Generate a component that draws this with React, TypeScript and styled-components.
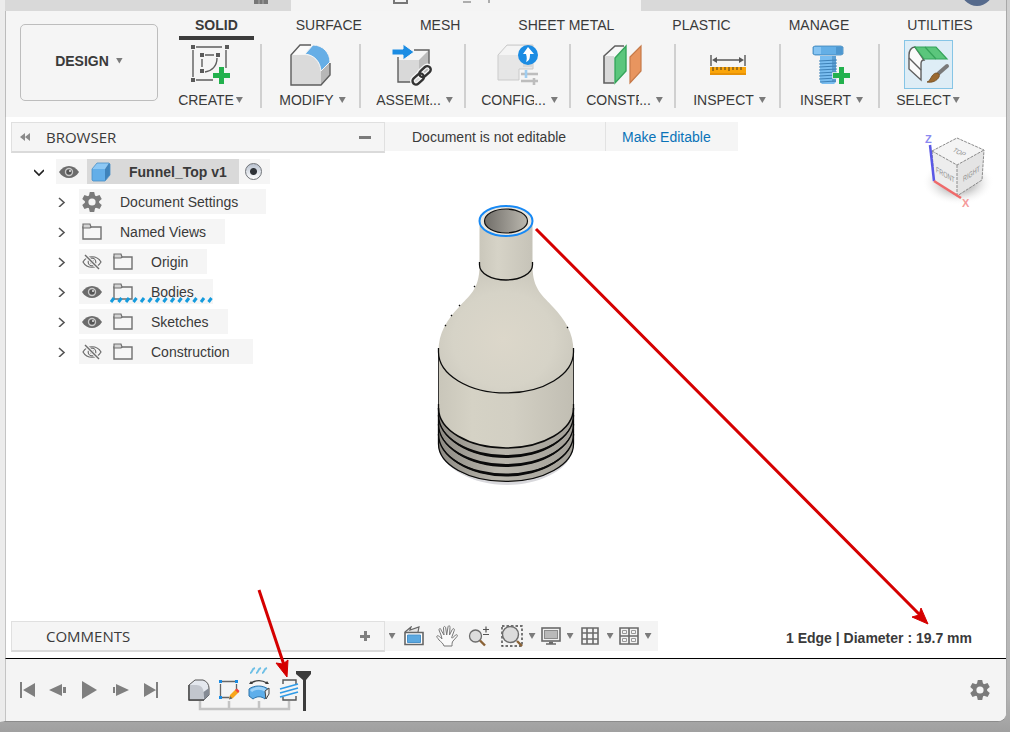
import React from "react";
import styled, { createGlobalStyle, css } from "styled-components";

const Global = createGlobalStyle`
  * { box-sizing: border-box; }
  html, body { margin: 0; padding: 0; }
  body { background: #a6a6a6; font-family: "Liberation Sans", Arial, sans-serif; font-size: 14px; line-height: 16px; color: #3a3a3a; }
  button { font: inherit; color: inherit; background: none; border: 0; padding: 0; margin: 0; }
  svg { display: block; flex: none; }
`;

const Desktop = styled.div`
  min-height: 100vh;
  display: flex;
  padding: 0 3px 10px 0;
  background: linear-gradient(#d0d0d0, #c6c6c6 60%, #b4b4b4 95%, #a0a0a0);
`;

const Window = styled.div`
  position: relative;
  flex: 1;
  min-width: 0;
  display: flex;
  flex-direction: column;
  background: #fff;
  border-left: 5px solid #ececec;
  border-right: 1px solid #a8a8a8;
  border-bottom: 1px solid #8c8c8c;
  border-bottom-right-radius: 9px;
  overflow: hidden;
`;

const TitleBar = styled.header`
  display: flex;
  height: 11px;
  background: #d9d9d9;
  overflow: hidden;
`;

const TitleSide = styled.div<{ $grow?: boolean }>`
  flex: ${(p) => (p.$grow ? "1" : "0 0 286px")};
  display: flex;
  justify-content: flex-end;
  padding-right: ${(p) => (p.$grow ? "16px" : "22px")};
`;

const DocumentTab = styled.div`
  flex: 0 0 350px;
  display: flex;
  padding-left: 102px;
  background: #f4f4f4;
`;

const Ribbon = styled.div`
  display: flex;
  height: 106px;
  padding-left: 14px;
  background: #f5f5f5;
  border-left: 1px solid #bcbcbc;
  flex: none;
`;

const WorkspaceButton = styled.button`
  display: flex;
  align-items: center;
  justify-content: center;
  gap: 7px;
  width: 138px;
  height: 77px;
  margin-top: 13px;
  flex: none;
  border: 1px solid #bdbdbd;
  border-radius: 5px;
  background: #f5f5f5;
  font-weight: bold;
  padding-bottom: 4px;
`;

const RibbonBody = styled.div`
  flex: 1;
  min-width: 0;
  padding-left: 21px;
`;

const Tabs = styled.nav`
  display: flex;
  gap: 26px;
  height: 29px;
`;

const Tab = styled.button<{ $active?: boolean }>`
  height: 29px;
  padding: 2px 16px 0;
  white-space: nowrap;
  border-bottom: 4px solid transparent;
  ${(p) => p.$active && css`border-color: #3c3c3c; font-weight: bold;`}
`;

const Tools = styled.div`
  display: flex;
  padding-top: 4px;
`;

const Tool = styled.button<{ $width: number; $first?: boolean; $last?: boolean }>`
  width: ${(p) => p.$width}px;
  height: 64px;
  flex: none;
  display: flex;
  flex-direction: column;
  align-items: center;
  justify-content: space-between;
  padding-right: ${(p) => (p.$first ? "18px" : "0")};
  border-right: ${(p) => (p.$last ? "0" : "2px solid #d0d0d0")};
`;

const ToolIcon = styled.span<{ $selected?: boolean }>`
  display: flex;
  align-items: center;
  justify-content: center;
  width: 49px;
  height: 49px;
  margin-top: -4px;
  border: 1px solid ${(p) => (p.$selected ? "#86c5e6" : "transparent")};
  background: ${(p) => (p.$selected ? "#deedf6" : "none")};
`;

const ToolLabel = styled.span<{ $tight?: boolean }>`
  display: flex;
  align-items: center;
  gap: ${(p) => (p.$tight ? "2px" : "5px")};
  padding-left: ${(p) => (p.$tight ? "0" : "4px")};
`;

const Clipped = styled.span`
  display: flex;
  & > span { width: 53px; overflow: hidden; text-align: left; }
`;

const CaretShape = styled.span`
  width: 7px;
  height: 6px;
  flex: none;
  background: #7b7b7b;
  clip-path: polygon(0 0, 100% 0, 50% 100%);
`;
const Caret = () => <CaretShape aria-hidden />;

const Viewport = styled.main`
  position: relative;
  flex: 1;
  display: flex;
  flex-direction: column;
  padding: 5px 0 6px 5px;
  border-left: 1px solid #c4c4c4;
  background: #fff;
`;

const TopRow = styled.div`
  display: flex;
  align-items: flex-start;
`;

const PanelHeader = styled.div`
  width: 374px;
  height: 31px;
  flex: none;
  display: flex;
  align-items: center;
  padding: 0 13px 0 7px;
  background: #f5f5f5;
  border: 1px solid #e0e0e0;
  border-bottom: 2px solid #dadada;
`;

const PanelTitle = styled.h2`
  flex: 1;
  margin: 0 0 0 15px;
  font: 400 15px/20px "Open Sans", "Noto Sans", sans-serif;
`;

const PanelButton = styled.button`
  display: flex;
  align-items: center;
  justify-content: center;
  width: 12px;
  height: 20px;
`;

const Notice = styled.div`
  display: flex;
  height: 29px;
  background: #f5f5f5;
`;

const NoticeText = styled.span`
  width: 221px;
  padding: 7px 0 0 27px;
  border-right: 1px solid #e2e2e2;
`;

const NoticeLink = styled.a`
  padding: 7px 27px 0 16px;
  color: #0a73b8;
  text-decoration: none;
`;

const Tree = styled.ul`
  list-style: none;
  margin: 0;
  padding: 6px 0 0 15px;
  width: max-content;
`;

const TreeRow = styled.li<{ $root?: boolean }>`
  display: flex;
  height: 25px;
  margin-bottom: 5px;
  padding-left: ${(p) => (p.$root ? "0" : "22px")};
`;

const Toggle = styled.button<{ $root?: boolean }>`
  width: ${(p) => (p.$root ? "30px" : "31px")};
  display: flex;
  align-items: center;
  padding-left: ${(p) => (p.$root ? "8px" : "10px")};
`;

const RowBody = styled.div<{ $pad?: number }>`
  position: relative;
  display: flex;
  align-items: center;
  padding-right: ${(p) => p.$pad ?? 19}px;
  background: #f5f5f5;
`;

const Slot = styled.button<{ $wide?: boolean }>`
  width: ${(p) => (p.$wide ? "41px" : "31px")};
  height: 25px;
  display: flex;
  align-items: center;
  padding-left: 3px;
`;

const RootName = styled.div`
  display: flex;
  align-items: center;
  height: 25px;
  width: 152px;
  margin-right: 6px;
  padding-left: 4px;
  gap: 18px;
  background: #d9d9d9;
  font-weight: bold;
`;

const Radio = styled.input`
  appearance: none;
  width: 17px;
  height: 17px;
  margin: 0;
  border: 1px solid #6f7378;
  border-radius: 50%;
  background: radial-gradient(circle, #2f3338 0 3px, transparent 4px), linear-gradient(#b9c2d0, #fff);
`;

const Squiggle = styled.svg`
  position: absolute;
  left: 31px;
  bottom: 1px;
`;

const Spacer = styled.div`
  flex: 1;
`;

const BottomRow = styled.div`
  display: flex;
  align-items: flex-start;
  padding-right: 34px;
`;

const NavBar = styled.div`
  display: flex;
  align-items: center;
  height: 30px;
  padding: 0 6px 0 3px;
  background: #f4f4f4;
`;

const NavButton = styled.button<{ $width: number }>`
  width: ${(p) => p.$width}px;
  height: 30px;
  display: flex;
  align-items: center;
  justify-content: center;
`;

const Status = styled.strong`
  margin-left: auto;
  padding-top: 9px;
  white-space: nowrap;
`;

const Model = styled.svg`
  position: absolute;
  left: 50%;
  top: 83px;
  margin-left: -76px;
`;

const ViewCube = styled.svg`
  position: absolute;
  right: 10px;
  top: 13px;
`;

const Timeline = styled.footer`
  display: flex;
  align-items: center;
  height: 63px;
  flex: none;
  padding: 0 16px 0 5px;
  border-top: 1px solid #000;
  border-left: 1px solid #c4c4c4;
  background: #f4f4f4;
`;

const PlayButton = styled.button`
  width: 31px;
  height: 30px;
  display: flex;
  align-items: center;
  justify-content: center;
`;

const FeatureStrip = styled.div`
  position: relative;
  display: flex;
  margin-left: 18px;
`;

const Feature = styled.button`
  position: relative;
  width: 30px;
  height: 62px;
  display: flex;
  align-items: center;
  justify-content: center;
`;

const TimelineTrack = styled.svg`
  position: absolute;
  left: 0;
  top: 0;
`;

const SettingsButton = styled.button`
  margin-left: auto;
`;

const Annotations = styled.svg`
  position: absolute;
  inset: 0;
  width: 100%;
  height: 100%;
  pointer-events: none;
`;

/* ---------- ribbon icons ---------- */

const Plus = ({ x, y }: { x: number; y: number }) => (
  <path
    transform={`translate(${x} ${y})`}
    d="M6 0h5v6h6v5h-6v6H6v-6H0V6h6z"
    fill="#23b14d"
    stroke="#f5f5f5"
    strokeWidth="1.5"
    paintOrder="stroke"
  />
);

const CreateIcon = () => (
  <svg width="44" height="42" viewBox="0 0 44 42">
    <g stroke="#5e5e5e" strokeWidth="1.4" fill="none">
      <path d="M7 3h26M4 6v27M37 6v18M7 36h17M16 11h9M13 15v8M28 14c0 8-5 13-12 14" />
    </g>
    <path d="M2 1h4v4H2zM36 1h4v4h-4zM2 34h4v4H2zM11 9h4v4h-4zM27 9h4v4h-4zM11 25h4v4h-4z" fill="#5a5a5a" />
    <Plus x={24} y={23} />
  </svg>
);

const ModifyIcon = () => (
  <svg width="42" height="42" viewBox="0 0 42 42">
    <path d="M1 11 10 1h11l-6 9z" fill="#fafafa" />
    <path d="M1 11h14c9 0 15 7 16 18v12H1z" fill="#dadada" />
    <path d="M31 27 40 18v13l-9 10z" fill="#b7b7b7" />
    <path d="M21 1H10L1 11v30h30l9-10V19" fill="none" stroke="#5d5d5d" strokeWidth="1.4" />
    <path d="M23 1c10 0 17 8 17 17l-9 9c-1-10-7-16-16-17z" fill="#66aee6" stroke="#f5f5f5" strokeWidth="1" />
  </svg>
);

const AssembleIcon = () => (
  <svg width="44" height="42" viewBox="0 0 44 42">
    <path d="M7 16 17 6h21L28 16z" fill="#f5f5f5" />
    <path d="M7 16h21v22H7z" fill="#d9d9d9" />
    <path d="M28 16 38 6v22L28 38z" fill="#bcbcbc" />
    <path d="M23 6h15v20M7 13v25h14" fill="none" stroke="#5f5f5f" strokeWidth="1.4" />
    <path d="M1 5h11V0l11 8-11 8v-5H1z" fill="#1b8ce3" stroke="#f5f5f5" strokeWidth="1" />
    <g transform="rotate(-42 31 31)" fill="none">
      <g stroke="#f5f5f5" strokeWidth="5">
        <rect x="19" y="28" width="13" height="7" rx="3.5" />
        <rect x="29" y="27" width="13" height="7" rx="3.5" />
      </g>
      <g stroke="#333" strokeWidth="2.4">
        <rect x="19" y="28" width="13" height="7" rx="3.5" />
        <rect x="29" y="27" width="13" height="7" rx="3.5" />
      </g>
    </g>
  </svg>
);

const ConfigureIcon = () => (
  <svg width="42" height="42" viewBox="0 0 42 42">
    <path d="M1 11 10 1h26v24H22v11H1z" fill="#e6e6e6" stroke="#cbcbcb" />
    <path d="M2 11 10 2h20l-9 9z" fill="#f4f4f4" />
    <path d="M26 12 36 3v20H26z" fill="#d7d7d7" />
    <path d="M24 30h17M24 37h17M37 34v7" stroke="#bdbdbd" strokeWidth="2.6" />
    <path d="M29 26v8" stroke="#9fcdf0" strokeWidth="2.6" />
    <circle cx="31" cy="11" r="10" fill="#1b8ce3" />
    <path d="M31 3l6 7h-4c0 5-1 7-4 8 1-2 1-5 0-8h-3z" fill="#fff" />
  </svg>
);

const ConstructIcon = () => (
  <svg width="42" height="42" viewBox="0 0 42 42">
    <path d="M2 12 13 2h10L13 12z" fill="#f8f8f8" />
    <path d="M2 12h10v27H2z" fill="#d9d9d9" />
    <path d="M22 2h-9L2 12v27h10" fill="none" stroke="#5f5f5f" strokeWidth="1.6" />
    <path d="M13 14 24 2v25L13 39z" fill="#5bc67c" stroke="#35a45a" strokeWidth="1.4" />
    <path d="M28 13 39 2v25L28 39z" fill="#e8955f" stroke="#c67a49" strokeWidth="1.2" />
  </svg>
);

const InspectIcon = () => (
  <svg width="36" height="42" viewBox="0 0 36 42">
    <path d="M1 11v11M35 11v11M4 16h28" stroke="#585858" strokeWidth="1.4" />
    <path d="M2 16l5-3v6zM34 16l-5-3v6z" fill="#585858" />
    <path d="M0 23h36v8H0z" fill="#faa50a" />
    <path d="M0 30h36" stroke="#e08c08" strokeWidth="1.5" />
    <path d="M3 23v4M7 23v3M11 23v3M15 23v3M19 23v4M23 23v3M27 23v3M31 23v3" stroke="#7a5a1c" strokeWidth="1.4" />
  </svg>
);

const InsertIcon = () => (
  <svg width="42" height="42" viewBox="0 0 42 42">
    <path d="M11 12h16v26l-2 2H13l-2-2z" fill="#79bdf0" />
    <path d="M23 12h4v26h-4z" fill="#5c9fd2" />
    <path d="M10 17l18-1M10 20l18-1M10 23l18-1M10 26l18-1M10 29l18-1M10 32l18-1M10 35l18-1M11 38l16-1" stroke="#3e82b8" strokeWidth="1" />
    <path d="M4 3l2-1h26l2 1v7l-2 1H6l-2-1z" fill="#64afe6" stroke="#3e84b8" strokeWidth=".8" />
    <path d="M5 3h7v7H5z" fill="#86c4f2" />
    <path d="M27 3h6v7h-6z" fill="#4e97cf" />
    <Plus x={24} y={23} />
  </svg>
);

const SelectIcon = () => (
  <svg width="47" height="47" viewBox="1 1 47 47">
    <path d="M11 7l9 13c-2 0-3 2-3 4v16L5 29V15c0-4 2-8 6-8z" fill="#fafafa" stroke="#5f5f5f" strokeWidth="1.4" />
    <path d="M5 18l12 12" stroke="#5f5f5f" strokeWidth="1.4" />
    <path d="M11 7h21l11 12H20z" fill="#5bc67c" stroke="#35a45a" strokeWidth="1.2" />
    <path d="M21 7l11 12" stroke="#35a45a" strokeWidth="1.2" />
    <path d="M43 26l-8 7" stroke="#7a7a7a" strokeWidth="4" strokeLinecap="round" />
    <path d="M23 42c4-1 4-8 9-9 3 0 4 2 3 4-2 4-7 6-12 5z" fill="#9a6930" stroke="#6f4a1f" strokeWidth=".8" />
  </svg>
);

/* ---------- browser icons ---------- */

const Eye = () => (
  <svg width="20" height="14" viewBox="0 0 20 14">
    <path d="M0 7C5-1 15-1 20 7 15 15 5 15 0 7z" fill="#6c6c6c" />
    <circle cx="10" cy="7" r="4.2" fill="#c9c9c9" />
    <circle cx="10" cy="7" r="2.8" fill="#555" />
    <circle cx="11" cy="6" r="1" fill="#e8e8e8" />
  </svg>
);

const EyeOff = () => (
  <svg width="20" height="16" viewBox="0 0 20 16" fill="none" stroke="#6c6c6c" strokeWidth="1.2">
    <path d="M1 8C5 1 15 1 19 8 15 15 5 15 1 8z" />
    <circle cx="10" cy="8" r="3.8" />
    <circle cx="10" cy="8" r="1.5" />
    <path d="M3 1l14 14" stroke="#f5f5f5" strokeWidth="3.4" />
    <path d="M3 1l14 14" strokeWidth="1.4" />
  </svg>
);

const Folder = () => (
  <svg width="20" height="18" viewBox="0 0 20 18">
    <path d="M1 4h18v12H1z" fill="#f6f6f6" stroke="#707070" strokeWidth="1.400" />
    <path d="M1 1h7l1 3-1 1H1z" fill="#d4d4d4" stroke="#707070" strokeWidth="1.200" />
  </svg>
);

const Gear = () => (
  <svg width="20" height="20" viewBox="-10 -10 20 20">
    <g fill="#7b7b7b">
      {[0, 60, 120].map((a) => (
        <path key={a} transform={`rotate(${a})`} d="M-3-6.500-2.200-10h4.400L3-6.500V6.500L2.200 10h-4.400L-3 6.500z" />
      ))}
      <circle r="7.200" />
    </g>
    <circle r="3.600" fill="#f5f5f5" />
  </svg>
);

const CubeIcon = () => (
  <svg width="20" height="20" viewBox="0 0 20 20">
    <path d="M1 7 6 1h12l-4 6z" fill="#8cc8f5" />
    <path d="M1 7h13v12H2l-1-1z" fill="#63aee8" />
    <path d="M14 7l4-6 1 1v11l-5 6z" fill="#3f83bb" />
    <path d="M1 7 6 1h12l1 1v11l-5 6H2l-1-1z" fill="none" stroke="#4a8fc6" strokeWidth=".8" />
  </svg>
);

const Chevron = ({ open }: { open?: boolean }) => (
  <svg width="10" height="10" viewBox="0 0 10 10" fill="none" stroke={open ? "#222" : "#555"} strokeWidth="1.6">
    <path d={open ? "M0 3l5 5 5-5" : "M1 1l5 4.500L1 10"} />
  </svg>
);

/* ---------- navigation icons ---------- */

const OrbitIcon = () => (
  <svg width="20" height="20" viewBox="0 0 20 20">
    <path d="M1 6 7 1 6 4l9-3-1 5" fill="#e4e4e4" stroke="#666" strokeWidth="1.200" />
    <path d="M1 6.500h18v12H1z" fill="#fff" stroke="#666" strokeWidth="1.600" />
    <path d="M3.500 9h13v7.500h-13z" fill="#5ba8e0" stroke="#4a93cb" />
  </svg>
);

const HandIcon = () => (
  <svg width="22" height="22" viewBox="0 0 22 22">
    <path
      d="M8 21c-1-3-3-4-5-6C2 13 0 12 1 11s3 1 5 3L5 10 3 5c0-2 2-2 2 0l3 5L7.500 3c0-2 2-2 2.200 0l1 7L12 2c.4-2 2.300-1.500 2 .4L13.500 10l2.800-5.500c1-1.600 2.500-.8 2 .8L16 11.500c-.5 1-.5 2 .5 1.500l3-3c1.500-1 2.400.3 1.500 1.500L17 16c-1 1-1 3-1 5z"
      fill="#fafafa" stroke="#777" strokeWidth="1"
    />
  </svg>
);

const ZoomIcon = () => (
  <svg width="22" height="22" viewBox="0 0 22 22">
    <circle cx="7.500" cy="11" r="6" fill="#dcdcdc" stroke="#6c6c6c" strokeWidth="1.300" />
    <path d="M12 15.500l5 5" stroke="#8a6236" strokeWidth="2.400" />
    <path d="M15 4.500h6M18 1.500v6M15 9.500h6" stroke="#555" strokeWidth="1.200" />
  </svg>
);

const FitIcon = () => (
  <svg width="22" height="22" viewBox="0 0 22 22">
    <rect x="1" y="1" width="20" height="20" fill="none" stroke="#444" strokeWidth="1.400" strokeDasharray="2.500 2" />
    <circle cx="9.500" cy="9.500" r="8" fill="#dcdcdc" stroke="#6c6c6c" strokeWidth="1.400" />
    <path d="M16 16l5 5" stroke="#8a6236" strokeWidth="2.400" />
  </svg>
);

const DisplayIcon = () => (
  <svg width="20" height="18" viewBox="0 0 20 18">
    <rect x="1" y="1" width="18" height="13" fill="#f0f0f0" stroke="#6a6a6a" strokeWidth="1.600" />
    <rect x="3.500" y="3.500" width="13" height="8" fill="#b9b9b9" stroke="#8a8a8a" />
    <path d="M5 17h10M8 15.500h4" stroke="#6a6a6a" strokeWidth="1.600" />
  </svg>
);

const GridIcon = () => (
  <svg width="18" height="18" viewBox="0 0 18 18" fill="none" stroke="#6a6a6a" strokeWidth="1.600">
    <path d="M1 1h16v16H1zM6 1v16M12 1v16M1 6h16M1 12h16" />
  </svg>
);

const LayoutIcon = () => (
  <svg width="20" height="18" viewBox="0 0 20 18" fill="none" stroke="#6a6a6a">
    <path d="M1 1h18v16H1zM10 1v16M1 9h18" strokeWidth="1.600" />
    <path d="M3.500 3.500h4v3h-4zM12.500 3.500h4v3h-4zM3.500 11.500h4v3h-4zM12.500 11.500h4v3h-4z" stroke="#999" />
  </svg>
);

/* ---------- timeline icons ---------- */

const playPaths: { label: string; d: string }[] = [
  { label: "Go to start", d: "M3 2h2v16H3zM18 3v14L6 10z" },
  { label: "Step back", d: "M14 4v12L1 10zM15 7h3v6h-3z" },
  { label: "Play", d: "M3 1l15 9L3 19z" },
  { label: "Step forward", d: "M6 4v12l13-6zM3 7h2v6H3z" },
  { label: "Go to end", d: "M15 2h2v16h-2zM3 3v14l12-7z" },
];

const SolidFeature = () => (
  <svg width="22" height="22" viewBox="0 0 22 22">
    <path d="M1 6 7 1h8c4 1 6 5 6 8v7l-5 5H1z" fill="#e4e8ee" stroke="#555" strokeWidth="1" />
    <path d="M1.500 6h7c4 0 7 3 7 7v8h-14z" fill="#c2c6cd" />
    <path d="M15.500 13 21 9v7l-5 5z" fill="#858b94" />
    <path d="M1 6v15h15" fill="none" stroke="#444" strokeWidth="1.400" />
  </svg>
);

const SketchFeature = () => (
  <svg width="22" height="22" viewBox="0 0 22 22">
    <path d="M4 2.500h13M2.500 5v12M18.500 5v6M4 18.500h7" stroke="#666" strokeWidth="1.300" />
    <path d="M1 1h3v3H1zM17 1h3v3h-3zM1 17h3v3H1z" fill="#1b8ce3" />
    <path d="M11 20l1-4 6-6 3 3-6 6z" fill="#f8a61c" />
    <path d="M17 11l2-1.500 2.500 2.500-1.500 2z" fill="#ef4444" />
    <path d="M11 20.500l1-3.500 2.500 2.500z" fill="#666" />
  </svg>
);

const RevolveFeature = () => (
  <svg width="22" height="22" viewBox="0 0 22 22">
    <path d="M3 4c5-3 11-3 16 0" fill="none" stroke="#3b3b3b" strokeWidth="1.400" />
    <path d="M1 5l2-3 2 3zM21 5l-2-3-2 3z" fill="#3b3b3b" />
    <path d="M1 10c5-4 14-4 19 0l-3 10c-4-3-8-3-12 0l-4-3z" fill="#5eaeea" stroke="#2e74aa" />
    <path d="M2 11c5-4 12-4 16-1l-1 3c-4-3-9-3-13 0z" fill="#9ed2f8" />
    <path d="M17 12l4-3v6l-3 5z" fill="#eee" stroke="#444" />
  </svg>
);

const ThreadFeature = () => (
  <svg width="22" height="22" viewBox="0 0 22 22">
    <path d="M5 5V1h13v4M5 18v3h13v-4" fill="none" stroke="#555" strokeWidth="1.400" />
    <path d="M2 10l18-5M2 14l18-5M2 18l18-5" stroke="#2f9ae6" strokeWidth="1.700" />
  </svg>
);

/* ---------- model ---------- */

const Bottle = () => (
  <Model width="152" height="294" viewBox="430 200 152 294" role="img" aria-label="Funnel_Top body">
    <defs>
      <linearGradient id="skin" x1="0" x2="1">
        <stop offset="0" stopColor="#c9c6ba" />
        <stop offset=".25" stopColor="#d5d2c5" />
        <stop offset=".55" stopColor="#d2cfc3" />
        <stop offset="1" stopColor="#c1beb3" />
      </linearGradient>
      <radialGradient id="dome" cx=".48" cy=".58" r=".62">
        <stop offset="0" stopColor="#dcd7ca" />
        <stop offset=".6" stopColor="#d6d3c7" />
        <stop offset="1" stopColor="#c8c5ba" />
      </radialGradient>
      <linearGradient id="neck" x1="0" x2="1">
        <stop offset="0" stopColor="#cac7bb" />
        <stop offset=".35" stopColor="#d6d3c7" />
        <stop offset="1" stopColor="#c6c3b8" />
      </linearGradient>
      <linearGradient id="bore" x1="0" x2="1">
        <stop offset="0" stopColor="#716e69" />
        <stop offset="1" stopColor="#bbb8af" />
      </linearGradient>
      <linearGradient id="threads" x1="0" x2="1">
        <stop offset="0" stopColor="#8e8b84" />
        <stop offset=".45" stopColor="#bab7ad" />
        <stop offset="1" stopColor="#a3a098" />
      </linearGradient>
    </defs>
    <path d="M438 446c3 22 35 39 69 39 24 0 50-9 61-24z" fill="#d8d8dc" />
    <path d="M438.500 350v94a67.500 38 0 0 0 135 0v-94z" fill="url(#skin)" />
    <path d="M438.500 408a67.500 40 0 0 0 135 0v36a67.500 38 0 0 1-135 0z" fill="url(#threads)" />
    <path d="M479.500 266c0 24-11 30-20.500 41-12 13-20.500 25-20.500 45a67.500 41 0 0 0 135 0c0-20-8.500-32-20.500-45-9.500-11-20.500-17-20.500-41z" fill="url(#dome)" />
    <path d="M479.500 221v44a26.500 15 0 0 0 53 0v-44z" fill="url(#neck)" />
    <g fill="#0b0b0b">
      <path d="M438.500 415a67.500 43 0 0 0 135 0a67.500 40 0 0 1-135 0z" />
      <path d="M438.500 424a67.500 43 0 0 0 135 0a67.500 40 0 0 1-135 0z" />
      <path d="M438.500 434a67.500 42.500 0 0 0 135 0a67.500 39.500 0 0 1-135 0z" />
    </g>
    <g fill="none" stroke="#0b0b0b">
      <path d="M438.500 415a67.500 41.500 0 0 0 135 0M438.500 424a67.500 41.500 0 0 0 135 0M438.500 434a67.500 41 0 0 0 135 0" strokeWidth="1.400" />
      <path d="M479.500 262v3a26.500 15 0 0 0 53 0v-3" strokeWidth="1.300" />
      <path d="M438.500 348v4a67.500 41 0 0 0 135 0v-4" strokeWidth="1.300" />
      <path d="M438.500 408a67.500 40 0 0 0 135 0" strokeWidth="1.500" />
      <path d="M438.500 404v40a67.500 37.500 0 0 0 135 0v-40" strokeWidth="1.300" />
      <path d="M438.500 350v54M573.500 350v54" strokeWidth=".8" />
      <path d="M475 286l-1 1M460 305l-1 1M452 315l-1 1M446 325l-1 1M567 327l1 1" strokeWidth="1.400" />
    </g>
    <ellipse cx="506" cy="221" rx="26.500" ry="15" fill="#e8e6df" stroke="#1789f5" strokeWidth="2" />
    <ellipse cx="506" cy="221" rx="21.500" ry="12" fill="url(#bore)" stroke="#111" strokeWidth="1.200" />
  </Model>
);

const Cube = () => (
  <ViewCube width="76" height="86" viewBox="920 130 76 86" role="img" aria-label="View cube">
    <defs>
      <radialGradient id="shade">
        <stop offset="0" stopColor="#9a9a9a" />
        <stop offset=".5" stopColor="#cfcfcf" />
        <stop offset="1" stopColor="#fff" stopOpacity="0" />
      </radialGradient>
    </defs>
    <ellipse cx="958" cy="182" rx="36" ry="23" fill="url(#shade)" />
    <path d="M932 151l25-13 27 12-27 15z" fill="#f4f4f4" />
    <path d="M932 151l25 14v31l-23-15z" fill="#ededed" />
    <path d="M984 150l-27 15v31l25-16z" fill="#e4e4e4" />
    <path d="M932 151l25-13 27 12-2 30-25 16-23-15zM932 151l25 14 27-15M957 165v31" fill="none" stroke="#8b8b8b" strokeWidth="1" strokeDasharray="3 1" />
    <path d="M930 145l4 36" stroke="#5a58e6" strokeWidth="2.500" />
    <path d="M934 181l27 17" stroke="#ef6a6a" strokeWidth="2.500" />
    <g fontFamily="Liberation Sans" fontWeight="bold">
      <text x="925" y="143" fontSize="11" fill="#8b8af0">Z</text>
      <text x="962" y="207" fontSize="11" fill="#f59a9a">X</text>
      <g fontSize="8" fill="#8e8e8e" fontWeight="normal">
        <text transform="matrix(.68 .4 0 1 936 172)">FRONT</text>
        <text transform="matrix(.68 -.45 0 1 963 182)">RIGHT</text>
        <text transform="matrix(.7 .35 -.6 .6 952 151)">TOP</text>
      </g>
    </g>
  </ViewCube>
);

/* ---------- content ---------- */

const tabs = ["SOLID", "SURFACE", "MESH", "SHEET METAL", "PLASTIC", "MANAGE", "UTILITIES"];

const clip = (text: string) => (
  <Clipped>
    <span>{text}</span>...
  </Clipped>
);

const tools: { label: React.ReactNode; icon: React.ReactNode; width: number; tight?: boolean; selected?: boolean }[] = [
  { label: "CREATE", icon: <CreateIcon />, width: 83, tight: true },
  { label: "MODIFY", icon: <ModifyIcon />, width: 99 },
  { label: clip("ASSEMB"), icon: <AssembleIcon />, width: 105 },
  { label: clip("CONFIG"), icon: <ConfigureIcon />, width: 105 },
  { label: clip("CONSTR"), icon: <ConstructIcon />, width: 105 },
  { label: "INSPECT", icon: <InspectIcon />, width: 105 },
  { label: "INSERT", icon: <InsertIcon />, width: 99 },
  { label: "SELECT", icon: <SelectIcon />, width: 96, tight: true, selected: true },
];

const nodes: { name: string; eye?: "on" | "off"; gear?: boolean; pad?: number; marked?: boolean }[] = [
  { name: "Document Settings", gear: true, pad: 28 },
  { name: "Named Views" },
  { name: "Origin", eye: "off" },
  { name: "Bodies", eye: "on", marked: true },
  { name: "Sketches", eye: "on" },
  { name: "Construction", eye: "off", pad: 23 },
];

const navItems: { label: string; icon: React.ReactNode; width: number }[] = [
  { label: "Navigation options", icon: <Caret />, width: 8 },
  { label: "Orbit", icon: <OrbitIcon />, width: 36 },
  { label: "Pan", icon: <HandIcon />, width: 30 },
  { label: "Zoom", icon: <ZoomIcon />, width: 34 },
  { label: "Fit", icon: <FitIcon />, width: 32 },
  { label: "Fit options", icon: <Caret />, width: 8 },
  { label: "Display settings", icon: <DisplayIcon />, width: 30 },
  { label: "Display options", icon: <Caret />, width: 8 },
  { label: "Grid and snaps", icon: <GridIcon />, width: 32 },
  { label: "Grid options", icon: <Caret />, width: 8 },
  { label: "Viewports", icon: <LayoutIcon />, width: 30 },
  { label: "Viewport options", icon: <Caret />, width: 8 },
];

export default function App() {
  return (
    <>
      <Global />
      <Desktop>
        <Window>
          <TitleBar>
            <TitleSide>
              <svg width="16" height="4" viewBox="0 0 16 4"><path d="M1 0h14v4H1z" fill="#777" /><path d="M6 0v4M10 0v4" stroke="#aaa" /></svg>
            </TitleSide>
            <DocumentTab>
              <svg width="100" height="4" viewBox="0 0 100 4">
                <path d="M1 0v3h13V0" fill="#f4f4f4" stroke="#777" strokeWidth="2" />
                <path d="M70 2h8M96 0v3" stroke="#666" strokeWidth="1" />
              </svg>
            </DocumentTab>
            <TitleSide $grow>
              <svg width="26" height="6" viewBox="0 0 26 6"><circle cx="13" cy="-10" r="16" fill="#566a8c" /></svg>
            </TitleSide>
          </TitleBar>

          <Ribbon>
            <WorkspaceButton>DESIGN <Caret /></WorkspaceButton>
            <RibbonBody>
              <Tabs>
                {tabs.map((t, i) => <Tab key={t} $active={i === 0}>{t}</Tab>)}
              </Tabs>
              <Tools>
                {tools.map((t, i) => (
                  <Tool key={i} $width={t.width} $first={i === 0} $last={i === tools.length - 1}>
                    <ToolIcon $selected={t.selected}>{t.icon}</ToolIcon>
                    <ToolLabel $tight={t.tight}>{t.label}<Caret /></ToolLabel>
                  </Tool>
                ))}
              </Tools>
            </RibbonBody>
          </Ribbon>

          <Viewport>
            <Bottle />
            <Cube />
            <TopRow>
              <PanelHeader>
                <PanelButton aria-label="Collapse browser">
                  <svg width="10" height="8" viewBox="0 0 10 8"><path d="M5 0v8L0 4zM10 0v8L5 4z" fill="#8a8a8a" /></svg>
                </PanelButton>
                <PanelTitle>BROWSER</PanelTitle>
                <PanelButton aria-label="Minimize browser">
                  <svg width="12" height="3" viewBox="0 0 12 3"><path d="M0 0h12v3H0z" fill="#7b7b7b" /></svg>
                </PanelButton>
              </PanelHeader>
              <Notice>
                <NoticeText>Document is not editable</NoticeText>
                <NoticeLink href="#">Make Editable</NoticeLink>
              </Notice>
            </TopRow>
            <Tree>
              <TreeRow $root>
                <Toggle $root aria-label="Collapse"><Chevron open /></Toggle>
                <RowBody $pad={8}>
                  <Slot aria-label="Hide"><Eye /></Slot>
                  <RootName><CubeIcon />Funnel_Top v1</RootName>
                  <Radio type="radio" defaultChecked aria-label="Activate component" />
                </RowBody>
              </TreeRow>
              {nodes.map((n) => (
                <TreeRow key={n.name}>
                  <Toggle aria-label={`Expand ${n.name}`}><Chevron /></Toggle>
                  <RowBody $pad={n.pad}>
                    {n.eye && <Slot aria-label="Visibility">{n.eye === "on" ? <Eye /> : <EyeOff />}</Slot>}
                    <Slot as="span" $wide>{n.gear ? <Gear /> : <Folder />}</Slot>
                    {n.name}
                    {n.marked && (
                      <Squiggle width="104" height="6" viewBox="0 0 104 6">
                        {Array.from({ length: 14 }, (_, i) => (
                          <path key={i} d={`M${1 + i * 7.5} 5l3-4`} stroke="#159bdd" strokeWidth="3" />
                        ))}
                      </Squiggle>
                    )}
                  </RowBody>
                </TreeRow>
              ))}
            </Tree>
            <Spacer />
            <BottomRow>
              <PanelHeader>
                <PanelButton as="span" />
                <PanelTitle>COMMENTS</PanelTitle>
                <PanelButton aria-label="Add comment">
                  <svg width="10" height="10" viewBox="0 0 10 10"><path d="M4 0h3v4h3v3H7v3H4V7H0V4h4z" fill="#808080" /></svg>
                </PanelButton>
              </PanelHeader>
              <NavBar>
                {navItems.map((n) => <NavButton key={n.label} $width={n.width} aria-label={n.label}>{n.icon}</NavButton>)}
              </NavBar>
              <Status>1 Edge | Diameter : 19.7 mm</Status>
            </BottomRow>
          </Viewport>

          <Timeline>
            {playPaths.map((p) => (
              <PlayButton key={p.label} aria-label={p.label}>
                <svg width="20" height="20" viewBox="0 0 20 20"><path d={p.d} fill="#7f7f7f" /></svg>
              </PlayButton>
            ))}
            <FeatureStrip>
              <TimelineTrack width="130" height="62" viewBox="0 0 130 62">
                <path d="M16 42v8h89v-8M45 42v8M75 42v8" fill="none" stroke="#c4c4c4" strokeWidth="2.500" />
                <path d="M66 14c3 0 1-4 5-5M72 14c3 0 1-4 5-5M78 14c3 0 1-4 5-5" fill="none" stroke="#6fc0e6" strokeWidth="2" />
                <path d="M112 12h15v3l-5 6v31h-3V21l-7-6z" fill="#3c3c3c" />
              </TimelineTrack>
              <Feature aria-label="Extrude"><SolidFeature /></Feature>
              <Feature aria-label="Sketch"><SketchFeature /></Feature>
              <Feature aria-label="Revolve"><RevolveFeature /></Feature>
              <Feature aria-label="Thread"><ThreadFeature /></Feature>
            </FeatureStrip>
            <SettingsButton aria-label="Settings"><Gear /></SettingsButton>
          </Timeline>

          <Annotations aria-hidden>
            <path d="M531 229l384 386M254 590l25 75" stroke="#d50000" strokeWidth="3" />
            <path d="M923 624l-16-7 7-2 2-7zM282 677l-11-14 7 1 5-4z" fill="#d50000" stroke="#d50000" strokeLinejoin="round" />
          </Annotations>
        </Window>
      </Desktop>
    </>
  );
}
